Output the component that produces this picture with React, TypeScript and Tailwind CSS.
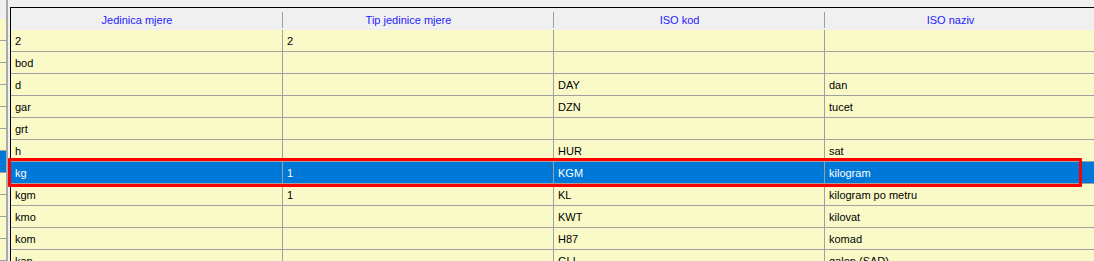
const rows = [
  ["2", "2", "", ""],
  ["bod", "", "", ""],
  ["d", "", "DAY", "dan"],
  ["gar", "", "DZN", "tucet"],
  ["grt", "", "", ""],
  ["h", "", "HUR", "sat"],
  ["kg", "1", "KGM", "kilogram"],
  ["kgm", "1", "KL", "kilogram po metru"],
  ["kmo", "", "KWT", "kilovat"],
  ["kom", "", "H87", "komad"],
  ["kan", "", "GLL", "galon (SAD)"],
];

const headers = ["Jedinica mjere", "Tip jedinice mjere", "ISO kod", "ISO naziv"];
const selected = 6;

export default function App() {
  return (
    <div className="relative w-[1094px] h-[261px] overflow-hidden bg-[#f0f0f0] flex text-[11px] leading-none text-black [font-family:'Liberation_Sans',Arial,sans-serif]">
      {/* neighbouring grid edge */}
      <div className="w-[6px] flex flex-col shrink-0">
        <div className="h-[30px] bg-[#f0f0f0]" />
        {rows.map((_, i) => (
          <div
            key={i}
            className={
              i === selected
                ? "h-[22px] shrink-0 bg-[#0078d7] border-b border-[#a0a0a0]"
                : "h-[22px] shrink-0 bg-[#fafac8] border-b border-[#a0a0a0]"
            }
          />
        ))}
      </div>
      {/* splitter */}
      <div className="w-[2px] shrink-0 bg-[#a9a9a9]" />
      <div className="w-[2px] shrink-0" />

      {/* main grid */}
      <div className="flex-1 mt-[7px] border-l border-t border-black flex flex-col overflow-hidden">
        <div className="h-[22px] shrink-0 grid grid-cols-[272px_271px_271px_271px] bg-[#f0f0f0]">
          {headers.map((h, i) => (
            <div key={h} className="relative flex items-center justify-center pt-[3px] pr-[20px] text-[#2323ff]">
              {h}
              {i < 3 && <div className="absolute right-0 top-[4px] bottom-[2px] w-px bg-[#a0a0a0]" />}
            </div>
          ))}
        </div>
        {rows.map((r, i) => (
          <div
            key={i}
            className={
              i === selected
                ? "h-[22px] shrink-0 grid grid-cols-[272px_271px_271px_271px] bg-[#0078d7] text-white border-b border-[#a0a0a0]"
                : "h-[22px] shrink-0 grid grid-cols-[272px_271px_271px_271px] bg-[#fafac8] border-b border-[#a0a0a0]"
            }
          >
            {r.map((c, j) => (
              <div
                key={j}
                className={
                  j < 3
                    ? "flex items-center pl-[4px] pt-[1px] border-r border-[#a0a0a0]"
                    : "flex items-center pl-[4px] pt-[1px]"
                }
              >
                {c}
              </div>
            ))}
          </div>
        ))}
      </div>

      {/* selection frame */}
      <div className="absolute left-[8px] top-[158px] w-[1074px] h-[29px] border-[3px] border-[#ff0000] rounded-[1px] pointer-events-none" />
    </div>
  );
}
